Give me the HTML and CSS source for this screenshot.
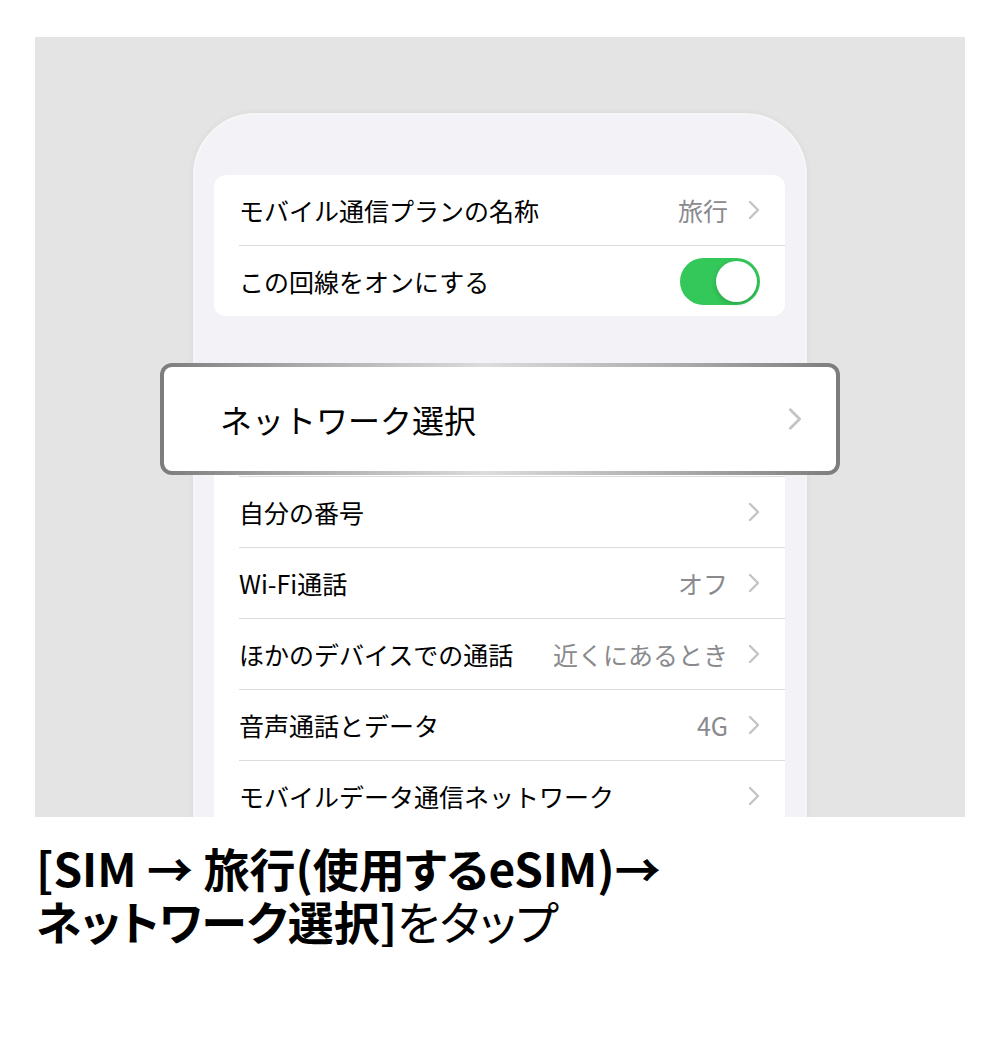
FILE: index.html
```html
<!DOCTYPE html>
<html lang="ja">
<head>
    <meta charset="UTF-8">
    <meta name="viewport" content="width=device-width, initial-scale=1.0">
    <title>ネットワーク選択</title>
    <link rel="stylesheet" href="styles.css">
</head>
<body>

<div class="stage">
    <div class="phone">
        <ul class="group">
            <li class="row">
                <span class="label">モバイル通信プランの名称</span>
                <span class="value">旅行</span>
                <svg class="chev" viewBox="0 0 12 20"><path d="M2 2 L10 10 L2 18"/></svg>
            </li>
            <li class="row">
                <span class="label">この回線をオンにする</span>
                <span class="toggle"><span class="knob"></span></span>
            </li>
        </ul>

        <ul class="group group-net">
            <!-- covered by the enlarged row below -->
            <li class="row"></li>
            <li class="row">
                <span class="label">自分の番号</span>
                <svg class="chev" viewBox="0 0 12 20"><path d="M2 2 L10 10 L2 18"/></svg>
            </li>
            <li class="row">
                <span class="label">Wi-Fi通話</span>
                <span class="value">オフ</span>
                <svg class="chev" viewBox="0 0 12 20"><path d="M2 2 L10 10 L2 18"/></svg>
            </li>
            <li class="row">
                <span class="label">ほかのデバイスでの通話</span>
                <span class="value">近くにあるとき</span>
                <svg class="chev" viewBox="0 0 12 20"><path d="M2 2 L10 10 L2 18"/></svg>
            </li>
            <li class="row">
                <span class="label">音声通話とデータ</span>
                <span class="value">4G</span>
                <svg class="chev" viewBox="0 0 12 20"><path d="M2 2 L10 10 L2 18"/></svg>
            </li>
            <li class="row">
                <span class="label">モバイルデータ通信ネットワーク</span>
                <svg class="chev" viewBox="0 0 12 20"><path d="M2 2 L10 10 L2 18"/></svg>
            </li>
        </ul>
    </div>

    <!-- enlarged row laid over the phone -->
    <div class="callout">
        <div class="callout-inner">
            <span class="callout-label">ネットワーク選択</span>
            <svg class="chev chev-big" viewBox="0 0 12 20"><path d="M2 2 L10 10 L2 18"/></svg>
        </div>
    </div>
</div>

<p class="caption"><b>[SIM → 旅行(使用するeSIM)→</b><br><b>ネットワーク選択]</b>をタップ</p>

</body>
</html>
```

FILE: styles.css
```css
body {
    margin: 0;
    background-color: #ffffff;
    font-family: "Noto Sans CJK JP", "Noto Sans", sans-serif;
    color: #000000;
}

.stage {
    position: relative;
    margin: 37px 35px 0;
    height: 780px;
    background-color: #e4e4e4;
    overflow: hidden;
}

/* phone screen */
.phone {
    margin: 76px 0 0 158px;
    width: 614px;
    height: 900px;
    box-sizing: border-box;
    padding: 60px 20px 0 19px;
    background-color: #f2f2f7;
    border: 2px solid #f6f6f8;
    border-radius: 62px;
    box-shadow: 0 0 6px rgba(0, 0, 0, 0.06);
}

.group {
    list-style: none;
    margin: 0;
    padding: 0;
    background-color: #ffffff;
    border-radius: 12px;
    overflow: hidden;
}

.group-net {
    margin-top: 90px;
}

.row {
    display: flex;
    align-items: center;
    height: 71px;
    margin-left: 25px;
    padding-right: 25px;
    border-top: 1px solid #dcdce0;
    box-sizing: border-box;
}

.row:first-child {
    border-top: none;
    height: 70px;
}

.label {
    flex: 1;
    font-size: 25px;
    white-space: nowrap;
}

.value {
    font-size: 25px;
    color: #8a8a8e;
    margin-right: 20px;
}

.chev {
    width: 12px;
    height: 20px;
    flex-shrink: 0;
}

.chev path {
    fill: none;
    stroke: #c4c4c7;
    stroke-width: 2.4;
    stroke-linecap: round;
    stroke-linejoin: round;
}

.toggle {
    position: relative;
    width: 80px;
    height: 47px;
    border-radius: 24px;
    background-color: #34c759;
}

.knob {
    position: absolute;
    top: 3px;
    right: 3px;
    width: 41px;
    height: 41px;
    border-radius: 50%;
    background-color: #ffffff;
    box-shadow: 0 2px 5px rgba(0, 0, 0, 0.18);
}

/* magnified row with a metallic frame */
.callout {
    position: absolute;
    left: 125px;
    top: 326px;
    width: 680px;
    height: 112px;
    box-sizing: border-box;
    padding: 4px;
    border-radius: 12px;
    background: linear-gradient(90deg, #7c7c7c 0%, #a8a8a8 20%, #dcdcdc 48%, #a8a8a8 78%, #7c7c7c 100%);
}

.callout-inner {
    display: flex;
    align-items: center;
    height: 100%;
    padding: 0 34px 0 56px;
    background-color: #ffffff;
    border-radius: 8px;
}

.callout-label {
    flex: 1;
    font-size: 32px;
}

.chev-big {
    width: 14px;
    height: 24px;
}

.caption {
    margin: 24px 0 0 36px;
    font-size: 46px;
    line-height: 53px;
    font-feature-settings: "palt";
}

.caption b {
    font-weight: 700;
}
```
